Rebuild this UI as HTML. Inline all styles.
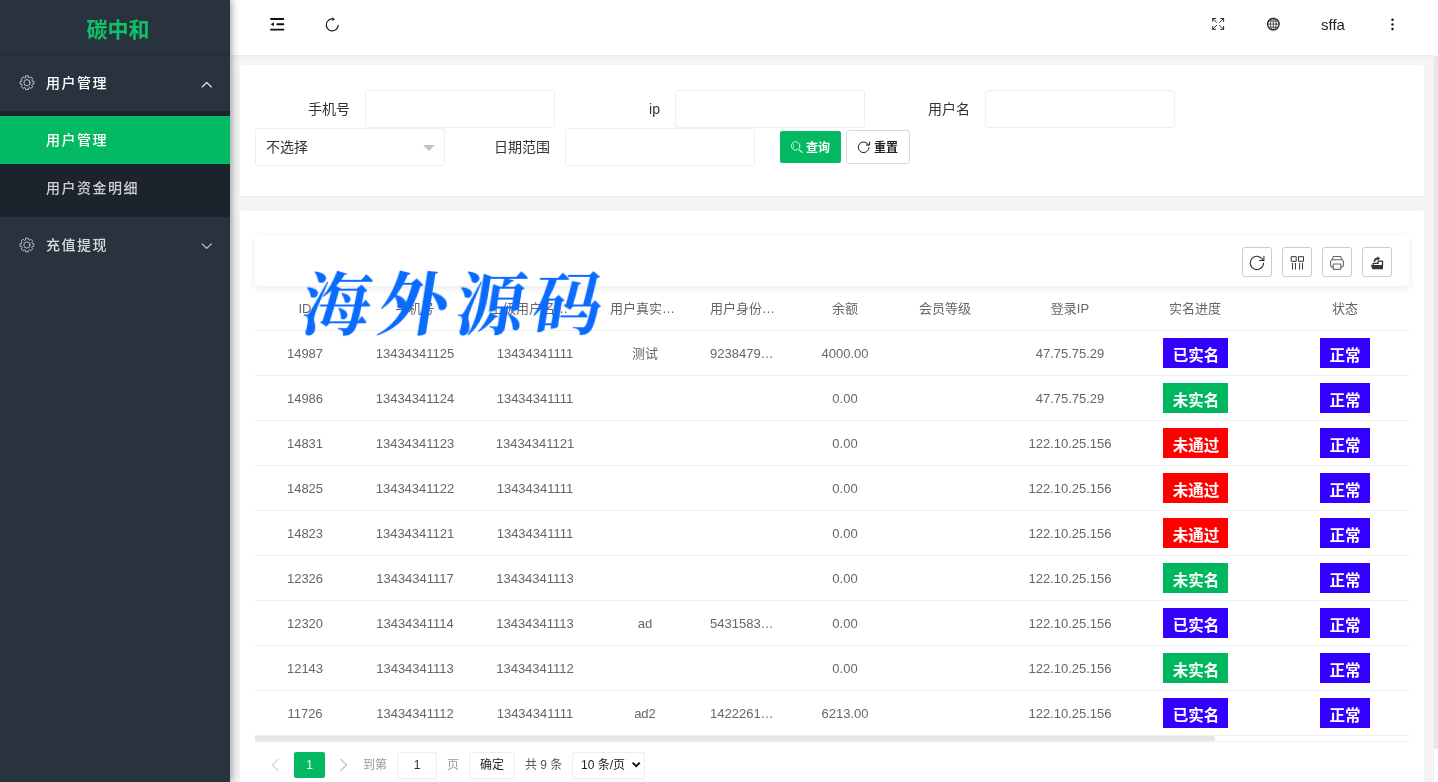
<!DOCTYPE html>
<html lang="zh-CN">
<head>
<meta charset="utf-8">
<title>碳中和</title>
<style>
*{box-sizing:border-box;margin:0;padding:0}
html,body{width:1438px;height:782px;overflow:hidden}
body{position:relative;background:#f4f4f4;font-family:"Liberation Sans","Noto Sans CJK SC",sans-serif;font-size:14px;color:#333;line-height:1}
a{text-decoration:none;color:inherit}
ul,li,dl,dd{list-style:none}
svg{display:block}
.ov{position:absolute;left:0;top:0;pointer-events:none}

/* ---------- sidebar ---------- */
.side,.hd,.card,.wm{will-change:transform}
.side{position:absolute;left:0;top:0;width:230px;height:782px;background:#28333e;box-shadow:2px 0 7px rgba(0,21,41,.36);z-index:20}
.logo{height:55px;line-height:60px;padding-left:6px;text-align:center;color:#0ec268;font-size:21px;font-weight:700;letter-spacing:0;border-bottom:1px solid rgba(0,0,0,.1)}
.nav-item>a{font-weight:500;display:block;position:relative;height:56px;line-height:56px;padding-left:46px;color:#fff;font-size:14px;letter-spacing:1.5px}
.nav-item.dim>a{color:rgba(255,255,255,.82)}
.nav-child{background:#1c232c;padding:5px 0;border-radius:0 0 3px 3px}
.nav-child a{font-weight:500;display:block;height:48px;line-height:48px;padding-left:46px;color:rgba(255,255,255,.78);font-size:14px;letter-spacing:1.5px}
.nav-child a.on{background:#03b961;color:#fff}

/* ---------- header ---------- */
.hd{position:absolute;left:230px;top:0;width:1208px;height:55px;background:#fff;box-shadow:0 1px 3px rgba(0,0,0,.06);z-index:10}
.hd .user{position:absolute;left:1091px;top:16px;font-size:15px;color:#222;line-height:18px}

/* ---------- scrollbar ---------- */
.vbar{position:absolute;left:1434px;top:55px;width:4px;height:727px;background:#fff;z-index:30}
.vbar i{display:block;width:4px;margin-top:1px;height:693px;background:#e6e6e6;border-radius:0 0 2px 2px}

/* ---------- cards ---------- */
.card{position:absolute;left:240px;width:1184px;background:#fff;border-radius:2px;box-shadow:0 1px 2px 0 rgba(0,0,0,.05)}
.card.search{top:65px;height:131px}
.card.list{top:211px;height:600px}

.fl{position:absolute;font-size:14px;color:#333;text-align:right;width:95px;line-height:20px}
.inp{position:absolute;width:190px;height:38px;border:1px solid #eee;border-radius:3px;background:#fff}
.sel{position:absolute;width:190px;height:38px;border:1px solid #eee;border-radius:3px;background:#fff;padding-left:10px;line-height:36px;font-size:14px;color:#333}
.sel:after{content:"";position:absolute;right:9px;top:15.5px;border:6px solid transparent;border-top-color:#c2c2c2}
.btn{position:absolute;height:32px;line-height:34px;font-size:12px;font-weight:700;border-radius:2px;white-space:nowrap}
.btn svg{position:absolute}
.btn.g{background:#03b961;color:#fff}
.btn.w{background:#fff;color:#222;border:1px solid #d6dbe6;height:34px;line-height:34px;border-radius:3px}

/* ---------- table ---------- */
.tool{position:absolute;left:15px;top:25px;width:1154px;height:50px;background:#fff;box-shadow:0 2px 8px 0 rgba(0,0,0,.09);border-radius:2px}
.tb{position:absolute;top:11px;width:30px;height:30px;border:1px solid #ccc;border-radius:3px;background:#fff}
.tb svg{position:absolute;left:6px;top:6px}
.twrap{position:absolute;left:15px;top:75px;width:1154px;height:451px;overflow:hidden}
table{border-collapse:separate;border-spacing:0;table-layout:fixed;width:1390px}
th,td{height:45px;border-bottom:1px solid #eee;text-align:center;font-size:13px;font-weight:400;color:#666;padding:0 15px;white-space:nowrap;overflow:hidden}
th{color:#666}
.el{text-align:left}
.bd{display:inline-block;height:30px;line-height:35px;padding:0 9px;overflow:hidden;font-size:15.5px;font-weight:700;color:#fff;vertical-align:middle}
.bd.w3{width:65px;padding:0 0 0 1px;position:relative;left:.5px}
.bd.b{background:#3300ff}.bd.g{background:#00b760}.bd.r{background:#ff0000}
.hbar{position:absolute;left:15px;top:525px;width:1154px;height:6px;background:#fff;border-bottom:1px solid #eee}
.hbar i{display:block;width:960px;height:5px;border-radius:0 2px 2px 0;background:#e6e6e6}

.pg{position:absolute;left:15px;top:541px;height:30px;font-size:12px;color:#888;line-height:26px}
.pg>*{position:absolute;top:0;white-space:nowrap}
.pg .cur{width:31px;height:26px;line-height:26px;background:#03b961;color:#fff;text-align:center;border-radius:2px}
.pg .pin{width:40px;height:27px;line-height:25px;border:1px solid #eee;border-radius:2px;text-align:center;color:#333}
.pg .pbt{width:46px;height:27px;line-height:25px;border:1px solid #eee;border-radius:2px;text-align:center;color:#222}
.pg .psel{width:73px;height:27px;line-height:25px;border:1px solid #eee;border-radius:2px;padding-left:8px;color:#222}

.wm{position:absolute;left:296px;top:266px;z-index:15;font-family:"Liberation Serif","Noto Serif CJK SC",serif;font-weight:700;font-size:69px;line-height:80px;color:#0a6cff;letter-spacing:8px;white-space:nowrap;transform:skewX(-9deg);transform-origin:left bottom}
</style>
</head>
<body>

<div class="side">
  <svg class="ov" width="230" height="782" viewBox="0 0 230 782" fill="none" stroke-linejoin="round" stroke-linecap="round">
    
    <g transform="translate(19 74.7)" stroke="rgba(255,255,255,.78)" stroke-width="0.9"><path d="M6.61 2.57 L6.68 1.13 L9.32 1.13 L9.39 2.57 L10.86 3.18 L11.93 2.20 L13.80 4.07 L12.82 5.14 L13.43 6.61 L14.87 6.68 L14.87 9.32 L13.43 9.39 L12.82 10.86 L13.80 11.93 L11.93 13.80 L10.86 12.82 L9.39 13.43 L9.32 14.87 L6.68 14.87 L6.61 13.43 L5.14 12.82 L4.07 13.80 L2.20 11.93 L3.18 10.86 L2.57 9.39 L1.13 9.32 L1.13 6.68 L2.57 6.61 L3.18 5.14 L2.20 4.07 L4.07 2.20 L5.14 3.18Z"/><circle cx="8" cy="8" r="3.1"/></g>
    <g transform="translate(18.9 237)" stroke="rgba(255,255,255,.7)" stroke-width="0.9"><path d="M6.61 2.57 L6.68 1.13 L9.32 1.13 L9.39 2.57 L10.86 3.18 L11.93 2.20 L13.80 4.07 L12.82 5.14 L13.43 6.61 L14.87 6.68 L14.87 9.32 L13.43 9.39 L12.82 10.86 L13.80 11.93 L11.93 13.80 L10.86 12.82 L9.39 13.43 L9.32 14.87 L6.68 14.87 L6.61 13.43 L5.14 12.82 L4.07 13.80 L2.20 11.93 L3.18 10.86 L2.57 9.39 L1.13 9.32 L1.13 6.68 L2.57 6.61 L3.18 5.14 L2.20 4.07 L4.07 2.20 L5.14 3.18Z"/><circle cx="8" cy="8" r="3.1"/></g>
    <path d="M202.1 87 L206.7 82.5 L211.4 87" stroke="rgba(255,255,255,.9)" stroke-width="1.1"/>
    <path d="M202.1 243.8 L206.7 248.4 L211.4 243.8" stroke="rgba(255,255,255,.75)" stroke-width="1.1"/>
  </svg>
  <div class="logo">碳中和</div>
  <ul>
    <li class="nav-item">
      <a>用户管理</a>
      <dl class="nav-child">
        <dd><a class="on">用户管理</a></dd>
        <dd><a>用户资金明细</a></dd>
      </dl>
    </li>
    <li class="nav-item dim">
      <a>充值提现</a>
    </li>
  </ul>
</div>

<div class="hd">
  <svg class="ov" width="1204" height="55" viewBox="230 0 1204 55" fill="none" stroke-linejoin="round" stroke-linecap="round">
    <g fill="#111"><rect x="270.1" y="18" width="14.2" height="1.9" rx=".9"/><rect x="276.4" y="23.35" width="7.9" height="1.9" rx=".9"/><rect x="270.1" y="28.65" width="14.2" height="1.9" rx=".9"/><path d="M270.7 24.3 L273.9 22.3 L273.9 26.3Z"/></g>
    <path d="M338.28 25.42 A6 6 0 1 1 333.34 18.99" stroke="#222" stroke-width="1.2"/>
    <path d="M332 17.2 L335 19.3 L332.5 21Z" fill="#222"/>
    <g stroke="#222" stroke-width=".95">
      <path d="M1216.6 22.4 L1212.7 18.5 M1212.7 21.4 V18.5 H1215.6"/>
      <path d="M1219.7 22.4 L1223.6 18.5 M1223.6 21.4 V18.5 H1220.7"/>
      <path d="M1216.6 25.4 L1212.7 29.3 M1212.7 26.4 V29.3 H1215.6"/>
      <path d="M1219.7 25.4 L1223.6 29.3 M1223.6 26.4 V29.3 H1220.7"/>
    </g>
    <g stroke="#222">
      <circle cx="1273.3" cy="24.1" r="5.8" stroke-width="1.3"/>
      <ellipse cx="1273.3" cy="24.1" rx="2.9" ry="5.8" stroke-width=".7"/>
      <path d="M1273.3 18.3 V29.9 M1267.5 24.1 H1279.1 M1268.4 21.1 H1278.2 M1268.4 27.1 H1278.2" stroke-width=".7"/>
    </g>
    <g fill="#111"><circle cx="1392.5" cy="19.8" r="1.2"/><circle cx="1392.5" cy="24.4" r="1.2"/><circle cx="1392.5" cy="29" r="1.2"/></g>
  </svg>
  <span class="user">sffa</span>
</div>

<div class="vbar"><i></i></div>

<div class="card search">
  <svg class="ov" width="1184" height="131" viewBox="240 65 1184 131" fill="none" stroke-linejoin="round" stroke-linecap="round" style="z-index:3">
    <g stroke="#fff">
      <circle cx="795.6" cy="145.9" r="4.2" stroke-width=".8"/>
      <path d="M793.4 144.2 V147.6" stroke-width=".6"/>
      <path d="M799 149.7 L802.2 152.5" stroke-width="1.4" stroke-opacity=".75"/>
    </g>
    <g stroke="#222" stroke-width="1">
      <path d="M869.1 147.5 A5.4 5.4 0 1 1 868.7 145.2"/>
      <path d="M869.6 142 V145 H866.4"/>
    </g>
  </svg>
  <label class="fl" style="left:15px;top:34px">手机号</label><div class="inp" style="left:125px;top:25px"></div>
  <label class="fl" style="left:325px;top:34px">ip</label><div class="inp" style="left:435px;top:25px"></div>
  <label class="fl" style="left:635px;top:34px">用户名</label><div class="inp" style="left:745px;top:25px"></div>
  <div class="sel" style="left:15px;top:63px">不选择</div>
  <label class="fl" style="left:215px;top:72px">日期范围</label><div class="inp" style="left:325px;top:63px"></div>
  <a class="btn g" style="left:540px;top:66px;width:61px;padding-left:26px">查询</a>
  <a class="btn w" style="left:606px;top:65px;width:64px;padding-left:27px">重置</a>
</div>

<div class="card list">
  <svg class="ov" width="1184" height="571" viewBox="240 211 1184 571" fill="none" stroke-linejoin="round" stroke-linecap="round" style="z-index:3">
    <g stroke="#333" stroke-width="1.1">
      <path d="M1263.5 263.2 A6.6 6.6 0 1 1 1263 260.4"/>
      <path d="M1263.9 256.2 V260.5 H1259.6"/>
    </g>
    <g stroke="#333" stroke-width="1">
      <rect x="1291.6" y="256.7" width="4.6" height="4.6"/>
      <rect x="1298.9" y="256.7" width="4.6" height="4.6"/>
      <path d="M1292.5 263.4 V269.2 M1295.4 263.4 V269.2 M1299.6 263.4 V269.2 M1302.5 263.4 V269.2"/>
    </g>
    <g stroke="#666" stroke-width="1.1">
      <path d="M1332.6 259.5 L1333.2 256.5 H1340.8 L1341.4 259.5"/>
      <path d="M1333.6 267 H1331.6 L1330.6 265.6 V261.2 L1331.6 259.8 H1342.4 L1343.4 261.2 V265.6 L1342.4 267 H1340.4"/>
      <path d="M1333.4 264 H1340.6 L1341.2 268 L1340.2 269.4 H1333.8 L1332.8 268Z"/>
    </g>
    <g>
      <path d="M1370.9 264.9 H1383 V269.3 H1372.3Z" fill="#333"/>
      <path d="M1373.2 265 V263.3 H1378.2 V261.2 H1382.5 V265.5" stroke="#333" stroke-width="1.3"/>
      <path d="M1374.5 261.8 C1374.4 259.5 1375.8 258.5 1377.6 258.5" stroke="#333" stroke-width="1.8" stroke-linecap="butt"/>
      <path d="M1377.3 256.2 L1380.2 258.5 L1377.3 260.8Z" fill="#333"/>
    </g>
    <path d="M278.2 759.4 L272.4 765 L278.2 770.6" stroke="#d2d2d2" stroke-width="1.1"/>
    <path d="M340.8 759.4 L346.6 765 L340.8 770.6" stroke="#bbb" stroke-width="1.1"/>
    <path d="M632.6 762.6 L636.2 766.2 L639.8 762.6" stroke="#111" stroke-width="2" stroke-linejoin="miter" stroke-linecap="butt"/>
  </svg>
  <div class="tool">
    <span class="tb" style="left:987px"></span>
    <span class="tb" style="left:1027px"></span>
    <span class="tb" style="left:1067px"></span>
    <span class="tb" style="left:1107px"></span>
  </div>
  <div class="twrap">
    <table>
      <colgroup><col style="width:100px"><col style="width:120px"><col style="width:120px"><col style="width:100px"><col style="width:100px"><col style="width:100px"><col style="width:100px"><col style="width:150px"><col style="width:100px"><col style="width:200px"><col style="width:200px"></colgroup>
      <thead><tr><th>ID</th><th>手机号</th><th class="el">上级用户名…</th><th class="el">用户真实…</th><th class="el">用户身份…</th><th>余额</th><th>会员等级</th><th>登录IP</th><th>实名进度</th><th>状态</th><th>操作</th></tr></thead>
      <tbody>
        <tr><td>14987</td><td>13434341125</td><td>13434341111</td><td>测试</td><td class="el">9238479…</td><td>4000.00</td><td></td><td>47.75.75.29</td><td><span class="bd w3 b">已实名</span></td><td><span class="bd b">正常</span></td><td></td></tr>
        <tr><td>14986</td><td>13434341124</td><td>13434341111</td><td></td><td></td><td>0.00</td><td></td><td>47.75.75.29</td><td><span class="bd w3 g">未实名</span></td><td><span class="bd b">正常</span></td><td></td></tr>
        <tr><td>14831</td><td>13434341123</td><td>13434341121</td><td></td><td></td><td>0.00</td><td></td><td>122.10.25.156</td><td><span class="bd w3 r">未通过</span></td><td><span class="bd b">正常</span></td><td></td></tr>
        <tr><td>14825</td><td>13434341122</td><td>13434341111</td><td></td><td></td><td>0.00</td><td></td><td>122.10.25.156</td><td><span class="bd w3 r">未通过</span></td><td><span class="bd b">正常</span></td><td></td></tr>
        <tr><td>14823</td><td>13434341121</td><td>13434341111</td><td></td><td></td><td>0.00</td><td></td><td>122.10.25.156</td><td><span class="bd w3 r">未通过</span></td><td><span class="bd b">正常</span></td><td></td></tr>
        <tr><td>12326</td><td>13434341117</td><td>13434341113</td><td></td><td></td><td>0.00</td><td></td><td>122.10.25.156</td><td><span class="bd w3 g">未实名</span></td><td><span class="bd b">正常</span></td><td></td></tr>
        <tr><td>12320</td><td>13434341114</td><td>13434341113</td><td>ad</td><td class="el">5431583…</td><td>0.00</td><td></td><td>122.10.25.156</td><td><span class="bd w3 b">已实名</span></td><td><span class="bd b">正常</span></td><td></td></tr>
        <tr><td>12143</td><td>13434341113</td><td>13434341112</td><td></td><td></td><td>0.00</td><td></td><td>122.10.25.156</td><td><span class="bd w3 g">未实名</span></td><td><span class="bd b">正常</span></td><td></td></tr>
        <tr><td>11726</td><td>13434341112</td><td>13434341111</td><td>ad2</td><td class="el">1422261…</td><td>6213.00</td><td></td><td>122.10.25.156</td><td><span class="bd w3 b">已实名</span></td><td><span class="bd b">正常</span></td><td></td></tr>
      </tbody>
    </table>
  </div>
  <div class="hbar"><i></i></div>
  <div class="pg">
    <span class="cur" style="left:39px">1</span>
    <span style="left:108px;color:#999">到第</span>
    <span class="pin" style="left:142px">1</span>
    <span style="left:192px;color:#999">页</span>
    <span class="pbt" style="left:214px">确定</span>
    <span style="left:270px;color:#555">共 9 条</span>
    <span class="psel" style="left:317px">10 条/页</span>
  </div>
</div>

<div class="wm">海外源码</div>

</body>
</html>
